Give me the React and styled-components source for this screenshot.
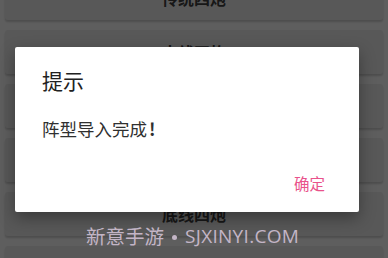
import React from "react";
import styled, { createGlobalStyle } from "styled-components";

const GlobalStyle = createGlobalStyle`
  html, body {
    margin: 0;
    padding: 0;
    background: #ebebeb;
    font-family: "Noto Sans CJK SC", "Noto Sans", sans-serif;
    overflow: hidden;
  }
`;

const Page = styled.div`
  position: relative;
  width: 388px;
  height: 258px;
  overflow: hidden;
  background: #ebebeb;
`;

const List = styled.div`
  display: flex;
  flex-direction: column;
  gap: 10px;
  padding: 0 5px;
  margin-top: -24px;
`;

const Row = styled.div`
  height: 44px;
  display: flex;
  align-items: center;
  justify-content: center;
  background: #dcdcdc;
  border-radius: 3px;
  box-shadow: 0 2px 2px rgba(0, 0, 0, 0.18);
  font-size: 16px;
  font-weight: 700;
  color: #3a3a3a;
`;

const Overlay = styled.div`
  position: absolute;
  inset: 0;
  background: rgba(0, 0, 0, 0.6);
`;

const Dialog = styled.div`
  position: absolute;
  left: 15px;
  top: 47px;
  width: 344px;
  height: 165px;
  box-sizing: border-box;
  background: #fff;
  border-radius: 2px;
  box-shadow: 0 6px 16px rgba(0, 0, 0, 0.35);
  padding: 19px 27px 0 27px;
  display: flex;
  flex-direction: column;
`;

const Title = styled.div`
  font-size: 21px;
  line-height: 28px;
  color: #212121;
`;

const Message = styled.div`
  margin-top: 22px;
  font-size: 17.5px;
  line-height: 26px;
  color: #303030;
`;

const Bang = styled.span`
  margin-left: 2px;
  font-weight: 700;
`;

const Actions = styled.div`
  margin-top: auto;
  height: 52px;
  display: flex;
  justify-content: flex-end;
  align-items: flex-start;
  padding-top: 11px;
  box-sizing: border-box;
`;

const Button = styled.span`
  font-size: 15.5px;
  line-height: 24px;
  color: #e9528b;
  margin-right: 7px;
`;

const Watermark = styled.div`
  position: absolute;
  left: 86px;
  top: 223px;
  display: flex;
  align-items: center;
  font-size: 19.5px;
  line-height: 26px;
  color: #c3b5c6;
  white-space: nowrap;
`;

const Dot = styled.span`
  width: 5px;
  height: 5px;
  border-radius: 50%;
  background: #c3b5c6;
  margin: 2px 8px 0 8px;
`;

const Site = styled.span`
  font-family: "Open Sans", "Noto Sans", sans-serif;
  font-size: 19px;
  letter-spacing: 0.3px;
`;

const rows = ["传统四炮", "中线四炮", "边线四炮", "斜线四炮", "底线四炮", "双线四炮"];

export default function App() {
  return (
    <Page>
      <GlobalStyle />
      <List>
        {rows.map((r) => (
          <Row key={r}>{r}</Row>
        ))}
      </List>
      <Overlay />
      <Dialog>
        <Title>提示</Title>
        <Message>
          阵型导入完成<Bang>!</Bang>
        </Message>
        <Actions>
          <Button>确定</Button>
        </Actions>
      </Dialog>
      <Watermark>
        新意手游
        <Dot />
        <Site>SJXINYI.COM</Site>
      </Watermark>
    </Page>
  );
}
